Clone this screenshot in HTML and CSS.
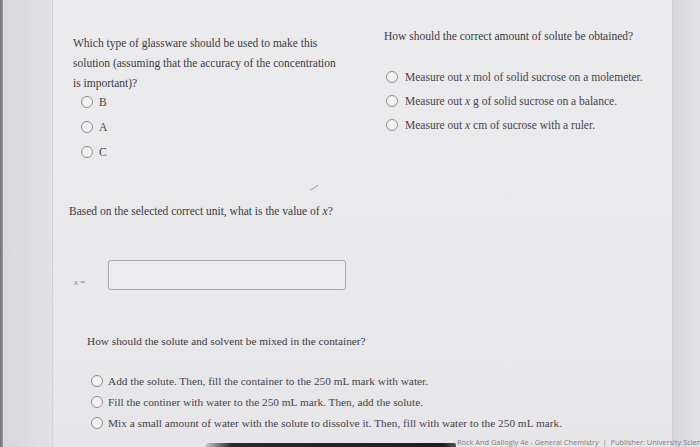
FILE: index.html
```html
<!DOCTYPE html>
<html>
<head>
<meta charset="utf-8">
<link rel="stylesheet" href="styles.css">
</head>
<body>
<div class="screen">
  <div class="edge"></div>
  <div class="side"></div>
  <main class="page">
    <section class="top">
      <div class="q q-left">
        <p class="prompt">Which type of glassware should be used to make this<br>solution (assuming that the accuracy of the concentration<br>is important)?</p>
        <ul class="opts opts-left">
          <li><span class="radio"></span><span class="label">B</span></li>
          <li><span class="radio"></span><span class="label">A</span></li>
          <li><span class="radio"></span><span class="label">C</span></li>
        </ul>
      </div>
      <div class="q q-right">
        <p class="prompt">How should the correct amount of solute be obtained?</p>
        <ul class="opts opts-right">
          <li><span class="radio"></span><span class="label">Measure out <i>x</i> mol of solid sucrose on a molemeter.</span></li>
          <li><span class="radio"></span><span class="label">Measure out <i>x</i> g of solid sucrose on a balance.</span></li>
          <li><span class="radio"></span><span class="label">Measure out <i>x</i> cm of sucrose with a ruler.</span></li>
        </ul>
      </div>
    </section>

    <section class="value">
      <div class="tick"><svg width="9" height="7" viewBox="0 0 9 7"><path d="M1 6 L8 1" stroke="#9a9aa0" stroke-width="1" fill="none"/><path d="M1 6 L0.5 4.8" stroke="#b0b0b5" stroke-width="0.8" fill="none"/></svg></div>
      <p class="prompt">Based on the selected correct unit, what is the value of <i>x</i>?</p>
      <div class="answer">
        <span class="var"><i>x</i> =</span>
        <span class="box"></span>
      </div>
    </section>

    <section class="mix">
      <p class="prompt">How should the solute and solvent be mixed in the container?</p>
      <ul class="opts opts-mix">
        <li><span class="radio"></span><span class="label">Add the solute. Then, fill the container to the 250 mL mark with water.</span></li>
        <li><span class="radio"></span><span class="label">Fill the continer with water to the 250 mL mark. Then, add the solute.</span></li>
        <li><span class="radio"></span><span class="label">Mix a small amount of water with the solute to dissolve it. Then, fill with water to the 250 mL mark.</span></li>
      </ul>
    </section>

    <footer class="foot">
      <span class="bar"></span>
      <span class="credit">Rock And Gallogly 4e - General Chemistry &nbsp;|&nbsp; Publisher: University Science Books</span>
    </footer>
  </main>
  <div class="rside"></div>
</div>
</body>
</html>
```
FILE: styles.css
```css
html, body {
  margin: 0;
  padding: 0;
}
body {
  width: 700px;
  height: 447px;
  overflow: hidden;
  background: #e6e6e8;
  font-family: "Liberation Serif", "Times New Roman", serif;
  color: #3d3d44;
}
.screen {
  display: flex;
  width: 700px;
  height: 447px;
  overflow: hidden;
}
.edge {
  width: 3px;
  flex-shrink: 0;
  background: linear-gradient(to right, #6e6e72, #9c9ca0);
}
.side {
  width: 49px;
  flex-shrink: 0;
  background: linear-gradient(to right, #d8d8da, #e2e2e4);
  border-right: 1px solid #d4d4d7;
}
.page {
  width: 619px;
  flex-shrink: 0;
  background: linear-gradient(to bottom, #ebebed, #e9e9eb 60%, #e6e6e8);
  display: flex;
  flex-direction: column;
}
.rside {
  flex: 1;
  background: linear-gradient(to right, #d9d9dc, #e2e2e4);
  border-left: 1px solid #d0d0d3;
}
.prompt {
  margin: 0;
  font-size: 11.5px;
  line-height: 20px;
  color: #3a3a42;
  white-space: nowrap;
}
.top {
  display: grid;
  grid-template-columns: 311px 1fr;
  padding-left: 20px;
}
.q-left {
  padding-top: 33px;
}
.q-right {
  padding-top: 26px;
}
.opts {
  list-style: none;
  margin: 0;
  padding: 0;
  font-size: 11.5px;
  color: #45454c;
  white-space: nowrap;
}
.opts li {
  display: flex;
  align-items: center;
}
.radio {
  display: inline-block;
  flex-shrink: 0;
  box-sizing: border-box;
  width: 12px;
  height: 12px;
  border: 1.4px solid #8d8d93;
  border-radius: 50%;
  background: #f2f2f3;
}
.opts-left {
  margin-top: -4px;
  padding-left: 8px;
}
.opts-left li {
  height: 25px;
}
.opts-left .radio {
  margin-right: 6px;
}
.opts-right {
  margin-top: 19px;
  padding-left: 2px;
}
.opts-right li {
  height: 24px;
}
.opts-right .radio {
  margin-right: 7px;
}
.value {
  padding-left: 16px;
  margin-top: 20px;
}
.tick {
  height: 9px;
  padding-left: 241px;
  margin-bottom: 8px;
}
.tick svg {
  display: block;
}
.answer {
  display: flex;
  align-items: center;
  margin-top: 39px;
  padding-left: 5px;
}
.var {
  width: 34px;
  font-size: 9px;
  color: #8a8a90;
  padding-top: 14px;
}
.box {
  display: block;
  box-sizing: border-box;
  width: 238px;
  height: 30px;
  border: 1.5px solid #a9a9ae;
  border-radius: 3px;
  background: #ececee;
}
.mix {
  padding-left: 34px;
  margin-top: 41px;
}
.mix .prompt,
.opts-mix {
  font-size: 11.3px;
}
.opts-mix {
  margin-top: 19px;
  padding-left: 4px;
}
.opts-mix li {
  height: 21px;
}
.opts-mix .radio {
  margin-right: 5px;
}
.foot {
  display: flex;
  align-items: flex-end;
  margin-top: 5px;
  white-space: nowrap;
  position: relative;
  z-index: 1;
}
.bar {
  display: block;
  flex-shrink: 0;
  margin-left: 153px;
  width: 250px;
  height: 4px;
  background: linear-gradient(to right, #c8c8cb, #2a2a2e 10%, #1e1e22 95%, #555 100%);
  border-radius: 2px 2px 0 0;
}
.credit {
  font-family: "Open Sans", "Liberation Sans", sans-serif;
  font-size: 7.4px;
  line-height: 9px;
  color: #7c7c84;
  margin-left: 1px;
}
```
